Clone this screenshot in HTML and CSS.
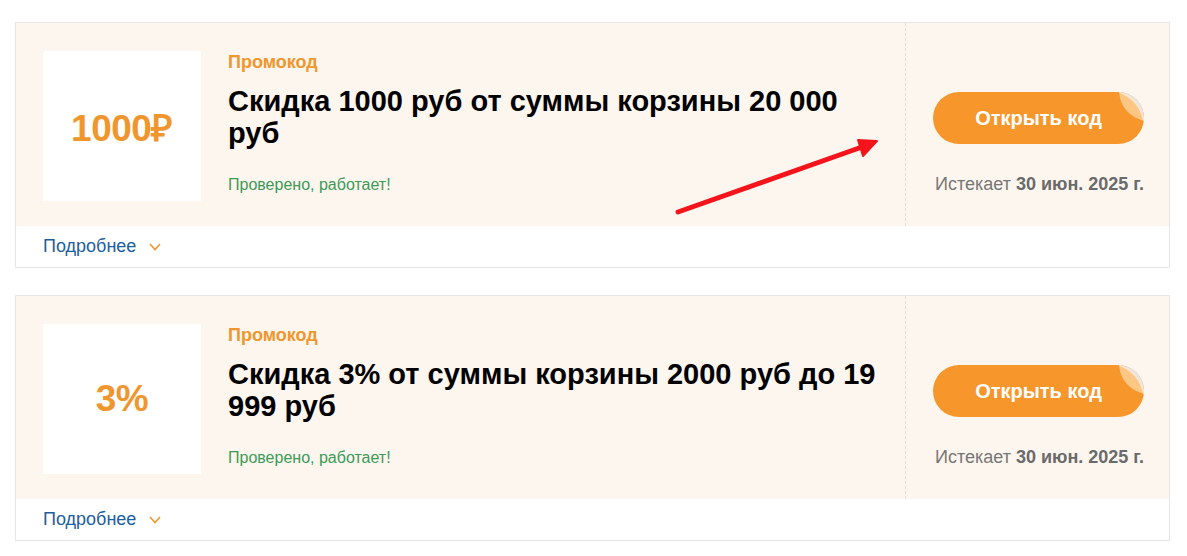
FILE: index.html
```html
<!DOCTYPE html>
<html lang="ru">
<head>
    <meta charset="UTF-8">
    <meta name="viewport" content="width=device-width, initial-scale=1.0">
    <title>Промокоды</title>
    <link rel="stylesheet" href="styles.css">
</head>
<body>
    <div class="coupons">

        <!-- Первый купон -->
        <div class="coupon">
            <div class="coupon-main">
                <div class="coupon-info">
                    <div class="coupon-logo">1000₽</div>
                    <div class="coupon-text">
                        <div class="coupon-type">Промокод</div>
                        <div class="coupon-title">Скидка 1000 руб от суммы корзины 20 000 руб</div>
                        <div class="coupon-verified">Проверено, работает!</div>
                    </div>
                </div>
                <div class="coupon-side">
                    <button class="open-button">
                        Открыть код
                        <svg class="peel" viewBox="0 0 30 30" width="30" height="30">
                            <polygon points="5,0 30,0 30,29" fill="#e4e6ec"/>
                            <path d="M5,0 Q7,22 30,29 Q25,7 5,0 Z" fill="#fcc685"/>
                            <path d="M5,0 Q25,7 30,29" fill="none" stroke="#fde6c8" stroke-width="1.5"/>
                        </svg>
                    </button>
                    <div class="expires">Истекает <b>30 июн. 2025 г.</b></div>
                </div>
            </div>
            <div class="coupon-footer">
                <span class="more">Подробнее</span>
                <svg class="chevron" viewBox="0 0 12 8" width="12" height="8">
                    <polyline points="1,1 6,6.5 11,1" fill="none" stroke="#f0962e" stroke-width="1.6"/>
                </svg>
            </div>
        </div>

        <!-- Второй купон -->
        <div class="coupon">
            <div class="coupon-main">
                <div class="coupon-info">
                    <div class="coupon-logo">3%</div>
                    <div class="coupon-text">
                        <div class="coupon-type">Промокод</div>
                        <div class="coupon-title">Скидка 3% от суммы корзины 2000 руб до 19 999 руб</div>
                        <div class="coupon-verified">Проверено, работает!</div>
                    </div>
                </div>
                <div class="coupon-side">
                    <button class="open-button">
                        Открыть код
                        <svg class="peel" viewBox="0 0 30 30" width="30" height="30">
                            <polygon points="5,0 30,0 30,29" fill="#e4e6ec"/>
                            <path d="M5,0 Q7,22 30,29 Q25,7 5,0 Z" fill="#fcc685"/>
                            <path d="M5,0 Q25,7 30,29" fill="none" stroke="#fde6c8" stroke-width="1.5"/>
                        </svg>
                    </button>
                    <div class="expires">Истекает <b>30 июн. 2025 г.</b></div>
                </div>
            </div>
            <div class="coupon-footer">
                <span class="more">Подробнее</span>
                <svg class="chevron" viewBox="0 0 12 8" width="12" height="8">
                    <polyline points="1,1 6,6.5 11,1" fill="none" stroke="#f0962e" stroke-width="1.6"/>
                </svg>
            </div>
        </div>

        <!-- Красная стрелка поверх купона -->
        <svg class="pointer-arrow" viewBox="0 0 220 90" width="220" height="90">
            <line x1="6" y1="83" x2="190" y2="18" stroke="#f5141b" stroke-width="5" stroke-linecap="round"/>
            <polygon points="205,12 186,11 191,27" fill="#f5141b" stroke="#f5141b" stroke-width="2" stroke-linejoin="round"/>
        </svg>
    </div>
</body>
</html>
```

FILE: styles.css
```css
body {
    margin: 0;
    padding: 22px 17px 0 15px;
    font-family: "Liberation Sans", Arial, sans-serif;
    background: #fff;
}
.coupons {
    position: relative;
}
.coupon {
    border: 1px solid #e6e6e6;
    background: #fff;
    margin-bottom: 27px;
}
.coupon-main {
    display: flex;
    height: 203px;
    background: #fdf6ef;
}
.coupon-info {
    flex: 1;
    display: flex;
    gap: 27px;
    padding: 28px 0 0 27px;
}
.coupon-logo {
    width: 158px;
    height: 150px;
    flex-shrink: 0;
    background: #fff;
    display: flex;
    justify-content: center;
    align-items: center;
    color: #f0962e;
    font-size: 37px;
    font-weight: bold;
    letter-spacing: -0.5px;
}
.coupon-text {
    max-width: 650px;
}
.coupon-type {
    color: #f0962e;
    font-weight: bold;
    font-size: 18px;
    line-height: 22px;
}
.coupon-title {
    margin-top: 12px;
    font-size: 29px;
    font-weight: bold;
    line-height: 32px;
    color: #000;
}
.coupon-verified {
    margin-top: 25px;
    color: #3b9a57;
    font-size: 16px;
    line-height: 22px;
}
.coupon-side {
    width: 264px;
    box-sizing: border-box;
    border-left: 1px dashed #eadcd4;
    padding: 69px 25px 0 27px;
}
.open-button {
    position: relative;
    overflow: hidden;
    width: 100%;
    height: 52px;
    border: none;
    border-radius: 26px;
    background: #f7962a;
    color: #fff;
    font-family: inherit;
    font-size: 20px;
    font-weight: bold;
    cursor: pointer;
    padding: 0;
}
.peel {
    position: absolute;
    top: 0;
    right: 0;
}
.expires {
    margin-top: 29px;
    text-align: right;
    color: #767676;
    font-size: 18px;
    line-height: 22px;
}
.expires b {
    color: #6a6a6a;
}
.coupon-footer {
    height: 41px;
    display: flex;
    align-items: center;
    padding-left: 27px;
}
.more {
    color: #1d5e9e;
    font-size: 18px;
}
.chevron {
    margin-left: 13px;
}
.pointer-arrow {
    position: absolute;
    left: 657px;
    top: 107px;
}
```
